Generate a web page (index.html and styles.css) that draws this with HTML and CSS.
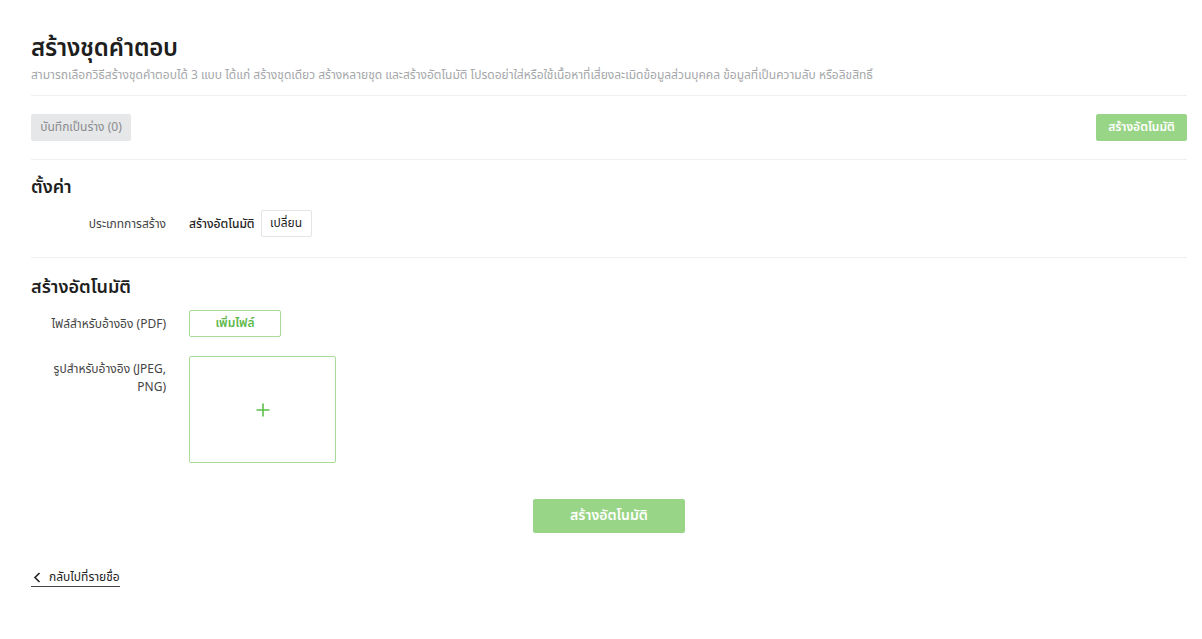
FILE: index.html
```html
<!DOCTYPE html>
<html lang="th">
<head>
<meta charset="utf-8">
<title>สร้างชุดคำตอบ</title>
<link rel="stylesheet" href="styles.css">
</head>
<body>
<div class="page">
  <header class="head">
    <h1 class="title">สร้างชุดคำตอบ</h1>
    <p class="desc">สามารถเลือกวิธีสร้างชุดคำตอบได้ 3 แบบ ได้แก่ สร้างชุดเดียว สร้างหลายชุด และสร้างอัตโนมัติ โปรดอย่าใส่หรือใช้เนื้อหาที่เสี่ยงละเมิดข้อมูลส่วนบุคคล ข้อมูลที่เป็นความลับ หรือลิขสิทธิ์</p>
  </header>
  <div class="toolbar">
    <button class="btn btn-draft">บันทึกเป็นร่าง (0)</button>
    <button class="btn btn-green">สร้างอัตโนมัติ</button>
  </div>
  <section class="section">
    <h2 class="sec-title">ตั้งค่า</h2>
    <div class="row row-center row-single">
      <div class="label">ประเภทการสร้าง</div>
      <div class="value">
        <span class="value-text">สร้างอัตโนมัติ</span>
        <button class="btn btn-outline">เปลี่ยน</button>
      </div>
    </div>
  </section>
  <section class="section section-last">
    <h2 class="sec-title">สร้างอัตโนมัติ</h2>
    <div class="row row-center">
      <div class="label">ไฟล์สำหรับอ้างอิง (PDF)</div>
      <div class="value">
        <button class="btn btn-file">เพิ่มไฟล์</button>
      </div>
    </div>
    <div class="row row-top">
      <div class="label label-wrap">รูปสำหรับอ้างอิง (JPEG, PNG)</div>
      <div class="value">
        <div class="upload">
          <svg width="14" height="14" viewBox="0 0 14 14"><path d="M7 0.5V13.5M0.5 7H13.5" stroke="#5cc04a" stroke-width="1.6" fill="none"/></svg>
        </div>
      </div>
    </div>
    <div class="submit-wrap">
      <button class="btn btn-submit">สร้างอัตโนมัติ</button>
    </div>
  </section>
  <a class="back" href="#">
    <svg width="8" height="11" viewBox="0 0 8 11"><path d="M6.5 1L2 5.5L6.5 10" stroke="#222" stroke-width="1.6" fill="none"/></svg>
    <span class="back-text">กลับไปที่รายชื่อ</span>
  </a>
</div>
</body>
</html>
```

FILE: styles.css
```css
* { box-sizing: border-box; }
html, body { margin: 0; padding: 0; background: #fff; }
body {
  font-family: "Noto Sans Thai", "Noto Sans", "Liberation Sans", sans-serif;
  color: #222;
}
.page { padding: 33px 15px 0 31px; }
.head { padding-bottom: 12px; border-bottom: 1px solid #eeeff0; }
.title { margin: 0; font-size: 24px; line-height: 32px; font-weight: 600; color: #1e1e1e; letter-spacing: -0.2px; }
.desc { margin: 2px 0 0; font-size: 12px; line-height: 16px; color: #a5a7aa; }
.toolbar {
  display: flex; justify-content: space-between; align-items: center;
  padding: 18px 0 18px; border-bottom: 1px solid #eeeff0;
}
.btn {
  font-family: inherit; font-size: 12px; cursor: pointer; border-radius: 2px;
  height: 27px; padding: 0; line-height: 25px; border: 1px solid transparent;
  white-space: nowrap; text-align: center;
}
.btn-draft { background: #e6e7e9; border-color: #e6e7e9; color: #8a8c8f; width: 100px; }
.btn-green { background: #99d586; color: #fff; font-weight: 600; width: 91px; border-color: #99d586; }
.section { padding: 16px 0 20px; border-bottom: 1px solid #eeeff0; }
.section-last { border-bottom: none; padding: 18px 0 0; }
.sec-title { margin: 0 0 10px; font-size: 18px; line-height: 24px; font-weight: 600; color: #1e1e1e; }
.row { display: flex; gap: 23px; margin-bottom: 19px; }
.row-single { margin-bottom: 0; }
.row-center { align-items: center; }
.row-top { align-items: flex-start; margin-bottom: 0; }
.label { width: 135px; flex: none; text-align: right; font-size: 12px; line-height: 18px; color: #444; }
.label-wrap { padding: 4px 0 0 22px; }
.value { display: flex; align-items: center; gap: 6px; font-size: 12px; }
.value-text { color: #222; font-weight: 500; }
.btn-outline { background: #fff; border-color: #e3e4e6; color: #222; width: 51px; }
.btn-file { background: #fff; border-color: #a8dc98; color: #5cb84a; font-weight: 600; width: 92px; }
.upload {
  width: 147px; height: 107px; border: 1px solid #a8dc98; border-radius: 2px;
  display: flex; align-items: center; justify-content: center;
}
.submit-wrap { display: flex; justify-content: center; padding: 36px 0 0; }
.btn-submit {
  background: #99d586; border-color: #99d586; color: #fff; font-weight: 600;
  width: 152px; height: 34px; font-size: 14px; line-height: 32px;
}
.back {
  display: inline-flex; align-items: center; gap: 8px; margin-top: 36px;
  text-decoration: none; color: #222; font-size: 12px; border-bottom: 1px solid #444;
  padding: 0 0 1px 2px;
}
.back-text { line-height: 16px; }
```
